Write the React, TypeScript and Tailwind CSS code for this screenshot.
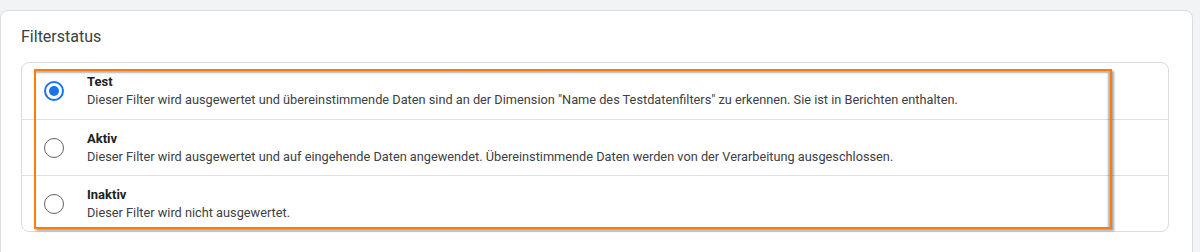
import React from "react";

const rows = [
  {
    title: "Test",
    desc: 'Dieser Filter wird ausgewertet und übereinstimmende Daten sind an der Dimension "Name des Testdatenfilters" zu erkennen. Sie ist in Berichten enthalten.',
    checked: true,
  },
  {
    title: "Aktiv",
    desc: "Dieser Filter wird ausgewertet und auf eingehende Daten angewendet. Übereinstimmende Daten werden von der Verarbeitung ausgeschlossen.",
    checked: false,
  },
  {
    title: "Inaktiv",
    desc: "Dieser Filter wird nicht ausgewertet.",
    checked: false,
  },
];

function Radio({ checked }: { checked: boolean }) {
  return checked ? (
    <div className="w-5 h-5 shrink-0 rounded-full border-2 border-[#1a73e8] flex items-center justify-center">
      <div className="w-[10px] h-[10px] rounded-full bg-[#1a73e8]" />
    </div>
  ) : (
    <div className="w-5 h-5 shrink-0 rounded-full border-[1.5px] border-[#5f6368]" />
  );
}

export default function App() {
  return (
    <div
      className="w-[1200px] h-[252px] overflow-hidden bg-[#f1f3f4] pt-[10px]"
      style={{ fontFamily: "Roboto, 'Liberation Sans', sans-serif" }}
    >
      <div className="w-[1193px] h-[260px] bg-white border border-[#dadce0] rounded-lg pl-5 pt-[14px] relative">
        <div className="text-[16px] leading-6 text-[#3c4043]">Filterstatus</div>
        <div className="mt-[13px] w-[1148px] border border-[#dadce0] rounded-lg">
          {rows.map((r, i) => (
            <div
              key={r.title}
              className={`flex items-center h-[56px] pl-[22px] ${i > 0 ? "border-t border-[#e0e0e0]" : ""}`}
            >
              <Radio checked={r.checked} />
              <div className="ml-[23px] flex flex-col">
                <div className="text-[13px] leading-[18px] font-bold text-[#202124]">{r.title}</div>
                <div className="text-[12.75px] leading-[18px] text-[#3c4043]">{r.desc}</div>
              </div>
            </div>
          ))}
        </div>
        <div className="absolute left-[33px] top-[58px] w-[1078px] h-[160px] border-2 border-[#fb7d0b] shadow-[2px_2px_2px_rgba(0,0,0,0.35),inset_-2px_2px_2px_rgba(0,0,0,0.3)] pointer-events-none" />
      </div>
    </div>
  );
}
